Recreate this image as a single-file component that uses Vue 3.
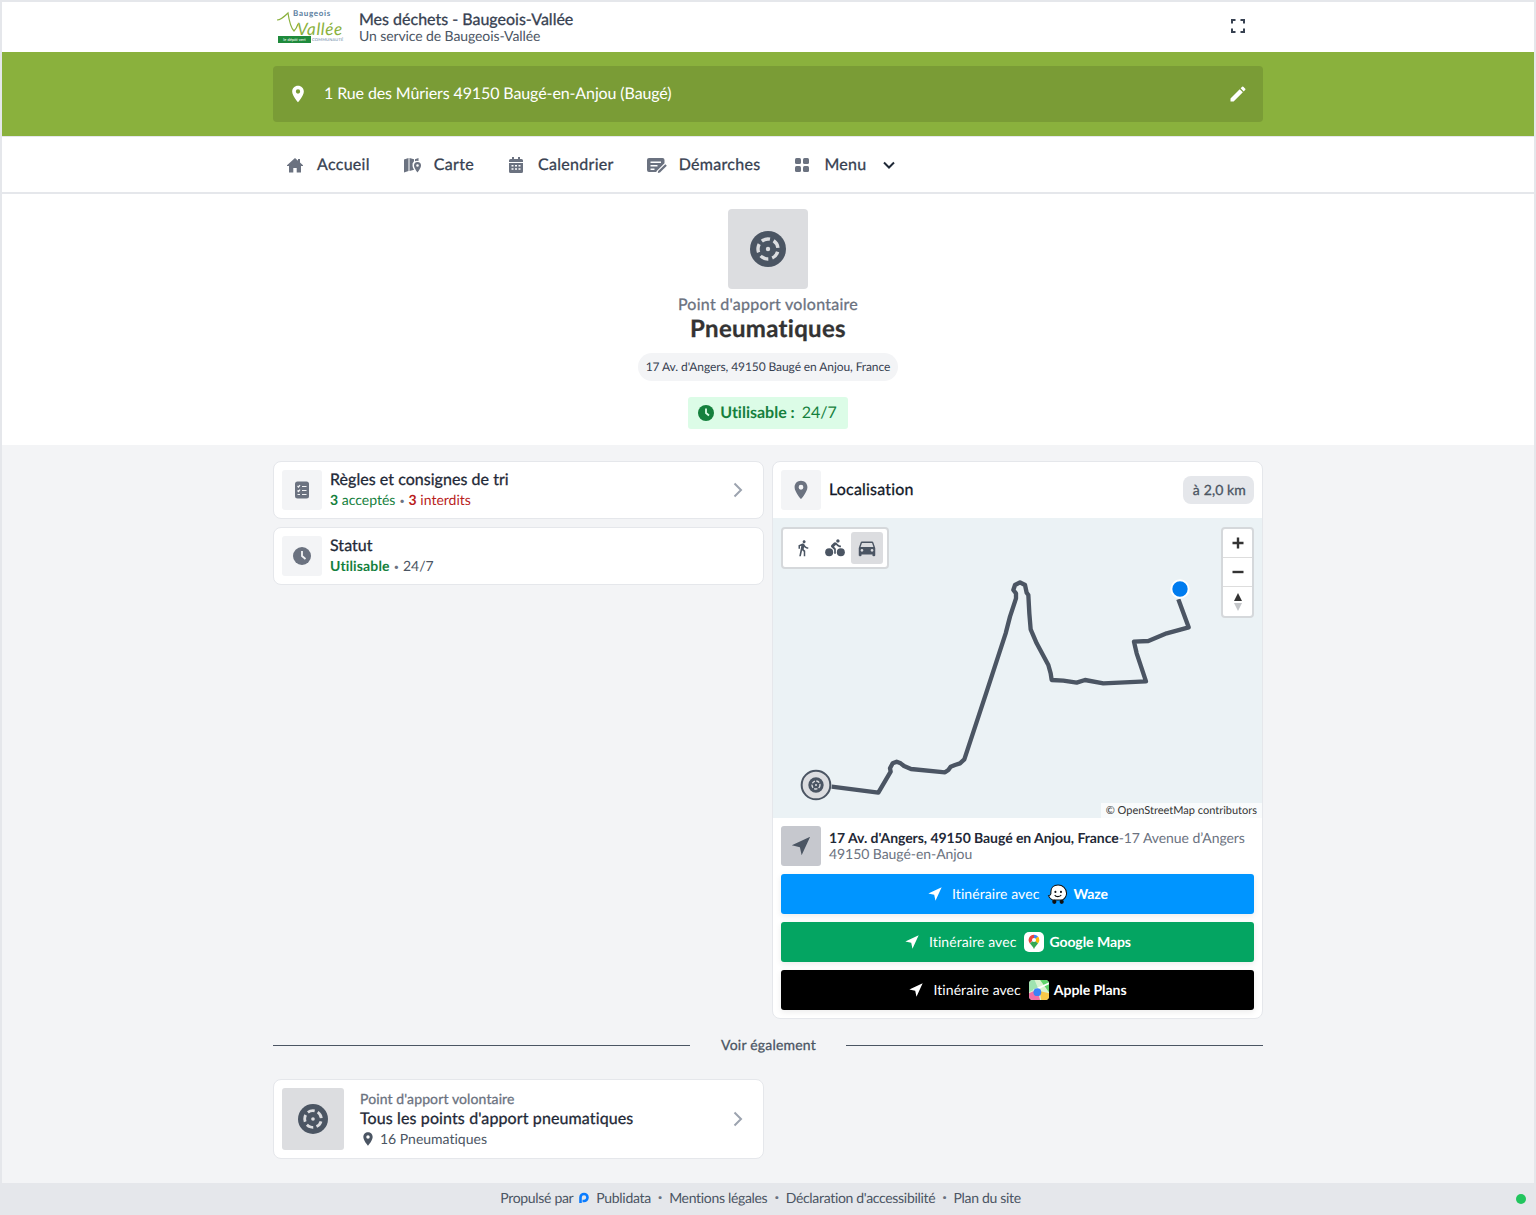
<script setup>
const pin = 'M12 2C8 2 5 5.100 5 9c0 5.200 7 13 7 13s7-7.800 7-13c0-3.900-3-7-7-7zm0 9.600A2.600 2.600 0 1 1 12 6.400a2.600 2.600 0 0 1 0 5.200z'
const arrow = 'M22 2 2 11.300l8.800 2 1.900 8.700z'

const navItems = [
  { label: 'Accueil', icon: 'home' },
  { label: 'Carte', icon: 'map' },
  { label: 'Calendrier', icon: 'calendar' },
  { label: 'Démarches', icon: 'form' },
  { label: 'Menu', icon: 'grid' }
]

const routePoints = [
  [155, 650], [295, 668], [332, 605], [330, 595], [338, 580], [350, 575], [362, 580], [372, 588],
  [393, 597], [495, 607], [505, 600], [512, 590], [525, 585], [540, 580], [553, 568], [620, 365],
  [677, 190], [690, 140], [708, 85], [708, 70], [700, 60], [705, 45], [720, 37], [735, 45],
  [740, 68], [745, 75], [748, 130], [752, 178], [770, 220], [805, 285], [812, 310], [815, 330],
  [850, 332], [890, 338], [915, 330], [970, 340], [1098, 334], [1070, 250], [1062, 215], [1105, 213],
  [1160, 190], [1226, 172], [1195, 88]
].map(p => p.join(',')).join(' ')
</script>

<template>
  <div class="page">
    <header class="top">
      <div class="wrap top-inner">
        <div class="logo">
          <svg class="logo-swoosh" viewBox="0 0 26 24" width="26" height="24">
            <path d="M0 10c4 0 7-3 11-7 1 7 2 14 6 18 2-2 3-4 4-7" fill="none" stroke="#8ab13d" stroke-width="1.200" />
          </svg>
          <span class="logo-top">Baugeois</span>
          <span class="logo-name">Vallée</span>
          <span class="logo-bar"><i>le dépôt vert</i><b>COMMUNAUTÉ</b></span>
        </div>
        <div class="brand">
          <div class="brand-title">Mes déchets - Baugeois-Vallée</div>
          <div class="brand-sub">Un service de Baugeois-Vallée</div>
        </div>
        <svg class="expand" viewBox="0 0 14 14" width="14" height="14">
          <path d="M1 4.500V1h3.500M9.500 1H13v3.500M13 9.500V13H9.500M4.500 13H1V9.500" fill="none" stroke="#374151" stroke-width="2" />
        </svg>
      </div>
    </header>

    <section class="band">
      <div class="wrap">
        <div class="address-bar">
          <svg viewBox="0 0 24 24" width="20" height="20"><path :d="pin" fill="#fff" fill-rule="evenodd" /></svg>
          <span class="address-text">1 Rue des Mûriers 49150 Baugé-en-Anjou (Baugé)</span>
          <svg class="pencil" viewBox="0 0 24 24" width="20" height="20">
            <path fill="#fff" d="M3 17.250V21h3.750L17.810 9.940l-3.750-3.750L3 17.250zM20.710 7.040a1 1 0 0 0 0-1.410l-2.340-2.340a1 1 0 0 0-1.410 0l-1.830 1.830 3.750 3.750 1.830-1.830z" />
          </svg>
        </div>
      </div>
    </section>

    <nav class="nav">
      <div class="wrap nav-inner">
        <a v-for="item in navItems" :key="item.label" class="nav-item">
          <svg v-if="item.icon === 'home'" class="nav-icon" viewBox="0 0 16 16" width="16" height="16">
            <path fill="#6b7280" d="M8 1 0 8.300V9h2v6.500h4.300V11h3.400v4.500H14V9h2v-.7L13 5.600V2h-2v1.800z" />
          </svg>
          <svg v-else-if="item.icon === 'map'" class="nav-icon map-icon" viewBox="0 0 18 18" width="18" height="18">
            <path fill="#6b7280" d="M0 3.500 4.500 2v13L0 16.500zM5.500 2 10 3.200v2A4.500 4.500 0 0 0 8.500 9.500c0 1.500.8 3 1.600 4.200L5.500 15z" />
            <path fill="#6b7280" d="M11 3.200 14.500 2v3.100a4.600 4.600 0 0 0-3.500.1z" />
            <path fill="#6b7280" fill-rule="evenodd" d="M13.500 6A3.500 3.500 0 0 0 10 9.500c0 2.500 3.500 7 3.500 7s3.500-4.500 3.500-7A3.500 3.500 0 0 0 13.500 6zm0 4.800a1.300 1.300 0 1 1 0-2.600 1.300 1.300 0 0 1 0 2.600z" />
          </svg>
          <svg v-else-if="item.icon === 'calendar'" class="nav-icon" viewBox="0 0 16 16" width="16" height="16">
            <path fill="#6b7280" fill-rule="evenodd" d="M4 0h2v2h4V0h2v2h1.500A1.500 1.500 0 0 1 15 3.500V5H1V3.500A1.500 1.500 0 0 1 2.500 2H4zM1 6h14v8.500a1.500 1.500 0 0 1-1.500 1.500h-11A1.500 1.500 0 0 1 1 14.500zm2.500 2v1.600h2V8zm3.500 0v1.600h2V8zm3.500 0v1.600h2V8zm-7 3.200v1.600h2v-1.600zm3.500 0v1.600h2v-1.600zm3.500 0v1.600h2v-1.600z" />
          </svg>
          <svg v-else-if="item.icon === 'form'" class="nav-icon wide" viewBox="0 0 20 16" width="20" height="16">
            <path fill="#6b7280" fill-rule="evenodd" d="M2 1h13.500a2 2 0 0 1 2 2v3.200l-7.800 7.800-.4 1H2a2 2 0 0 1-2-2V3a2 2 0 0 1 2-2zm1.500 3.500V6h10.500V4.500zm0 3.500v1.500h7V8zm0 3.500V13h4v-1.500z" />
            <path fill="#6b7280" d="M18.300 7.300 19.800 8.800 13 15.600l-2.200.4.400-2z" />
          </svg>
          <svg v-else class="nav-icon" viewBox="0 0 16 16" width="16" height="16">
            <rect fill="#6b7280" x="1" y="1" width="6" height="6" rx="1.500" />
            <rect fill="#6b7280" x="9" y="1" width="6" height="6" rx="1.500" />
            <rect fill="#6b7280" x="1" y="9" width="6" height="6" rx="1.500" />
            <rect fill="#6b7280" x="9" y="9" width="6" height="6" rx="1.500" />
          </svg>
          <span class="medium">{{ item.label }}</span>
          <svg v-if="item.icon === 'grid'" class="chevron-down" viewBox="0 0 12 8" width="12" height="8">
            <path d="M1 1.500 6 6.500 11 1.500" fill="none" stroke="#1f2937" stroke-width="2" />
          </svg>
        </a>
      </div>
    </nav>

    <section class="hero">
      <div class="hero-icon">
        <svg viewBox="0 0 36 36" width="36" height="36">
          <circle cx="18" cy="18" r="18" fill="#4b5563" />
          <circle cx="18" cy="18" r="10" fill="none" stroke="#dcdde0" stroke-width="3.400" stroke-dasharray="8.500 4" transform="rotate(16 18 18)" />
          <circle cx="18" cy="18" r="2.200" fill="#dcdde0" />
        </svg>
      </div>
      <div class="hero-kicker medium">Point d'apport volontaire</div>
      <h1 class="hero-title">Pneumatiques</h1>
      <div class="hero-address">17 Av. d'Angers, 49150 Baugé en Anjou, France</div>
      <div class="hero-status">
        <svg viewBox="0 0 16 16" width="16" height="16">
          <circle cx="8" cy="8" r="8" fill="#15803d" />
          <path d="M8 3.500V8l3 2.500" fill="none" stroke="#dcfce7" stroke-width="1.800" />
        </svg>
        <b>Utilisable :</b>
        <span>24/7</span>
      </div>
    </section>

    <main class="main">
      <div class="wrap columns">
        <div class="col">
          <a class="card row">
            <span class="icon-box">
              <svg viewBox="0 0 16 18" width="16" height="18">
                <rect width="14" height="17" x="1" y=".5" rx="2.500" fill="#6b7280" />
                <path d="M3.500 5l1 1 1.500-1.800M3.500 9.500l1 1 1.500-1.800M3.500 13.500H6M8 5.500h4.500M8 9.500h4.500M8 13.500h4.500" fill="none" stroke="#f3f4f6" stroke-width="1.200" />
              </svg>
            </span>
            <span class="row-text">
              <span class="row-title medium">Règles et consignes de tri</span>
              <span class="row-sub">
                <span class="green"><b>3</b> acceptés</span>
                <i class="dot">•</i>
                <span class="red"><b>3</b> interdits</span>
              </span>
            </span>
            <svg class="chevron" viewBox="0 0 10 16" width="10" height="16">
              <path d="M1.500 1.500 8 8l-6.500 6.500" fill="none" stroke="#9ca3af" stroke-width="2" />
            </svg>
          </a>
          <a class="card row">
            <span class="icon-box">
              <svg viewBox="0 0 18 18" width="18" height="18">
                <circle cx="9" cy="9" r="9" fill="#6b7280" />
                <path d="M9 4v5l3.500 3" fill="none" stroke="#f3f4f6" stroke-width="1.800" />
              </svg>
            </span>
            <span class="row-text">
              <span class="row-title medium">Statut</span>
              <span class="row-sub">
                <b class="green">Utilisable</b>
                <i class="dot">•</i>
                <span class="muted">24/7</span>
              </span>
            </span>
          </a>
        </div>

        <div class="card location">
          <div class="location-head">
            <span class="icon-box">
              <svg viewBox="0 0 24 24" width="22" height="22"><path :d="pin" fill="#6b7280" fill-rule="evenodd" /></svg>
            </span>
            <span class="location-title medium">Localisation</span>
            <span class="distance medium">à 2,0 km</span>
          </div>

          <div class="map">
            <div class="modes">
              <span class="mode">
                <svg viewBox="0 0 24 24" width="18" height="18"><path fill="#4b5563" d="M13.500 5.500c1.100 0 2-.9 2-2s-.9-2-2-2-2 .9-2 2 .9 2 2 2zM9.800 8.900 7 23h2.100l1.800-8 2.100 2v6h2v-7.500l-2.100-2 .6-3C14.800 12 16.800 13 19 13v-2c-1.900 0-3.500-1-4.300-2.400l-1-1.600c-.4-.6-1-1-1.700-1-.3 0-.5.1-.8.1L6 8.300V13h2V9.600l1.800-.7" /></svg>
              </span>
              <span class="mode">
                <svg viewBox="0 0 24 24" width="20" height="20">
                  <path fill="#4b5563" d="M15.500 5.500c1.100 0 2-.9 2-2s-.9-2-2-2-2 .9-2 2 .9 2 2 2zM10.800 10.500l2.400-2.400.8.800c1.300 1.300 3 2.100 5.100 2.100V9c-1.500 0-2.700-.6-3.600-1.500l-1.900-1.900c-.5-.4-1-.6-1.600-.6s-1.100.2-1.400.6L7.800 8.400c-.4.400-.6.900-.6 1.400 0 .6.200 1.100.6 1.400L11 14v5h2v-6.200z" />
                  <circle cx="5" cy="17" r="4.800" fill="#4b5563" />
                  <circle cx="19" cy="17" r="4.800" fill="#4b5563" />
                </svg>
              </span>
              <span class="mode active">
                <svg viewBox="0 0 24 24" width="22" height="22"><path fill="#4b5563" d="M18.920 6.010C18.720 5.420 18.160 5 17.500 5h-11c-.66 0-1.210.42-1.420 1.010L3 12v8c0 .55.450 1 1 1h1c.55 0 1-.45 1-1v-1h12v1c0 .55.450 1 1 1h1c.55 0 1-.45 1-1v-8l-2.080-5.990zM6.500 16c-.83 0-1.500-.67-1.500-1.500S5.670 13 6.500 13s1.500.67 1.500 1.500S7.330 16 6.500 16zm11 0c-.83 0-1.500-.67-1.500-1.500s.67-1.500 1.500-1.500 1.500.67 1.500 1.500-.67 1.500-1.500 1.500zM5 11l1.500-4.500h11L19 11H5z" /></svg>
              </span>
            </div>

            <div class="zoom-ctrl">
              <span class="zoom-btn">
                <svg viewBox="0 0 12 12" width="12" height="12"><path d="M6 .5v11M.5 6h11" stroke="#333" stroke-width="2.400" /></svg>
              </span>
              <span class="zoom-btn">
                <svg viewBox="0 0 12 12" width="12" height="12"><path d="M.5 6h11" stroke="#333" stroke-width="2.400" /></svg>
              </span>
              <span class="zoom-btn">
                <svg viewBox="0 0 8 18" width="8" height="18">
                  <path d="M4 0 8 8H0z" fill="#333" />
                  <path d="M4 18 8 10H0z" fill="#c4c6c9" />
                </svg>
              </span>
            </div>

            <svg class="route" viewBox="0 0 1290 720" width="430" height="240">
              <polyline :points="routePoints" fill="none" stroke="#4b5563" stroke-width="13" stroke-linejoin="round" />
              <circle cx="108" cy="645" r="43" fill="#dcdde0" stroke="#4b5563" stroke-width="6" />
              <circle cx="108" cy="645" r="23" fill="#4b5563" />
              <circle cx="108" cy="645" r="12" fill="none" stroke="#dcdde0" stroke-width="4" stroke-dasharray="10 4" />
              <circle cx="108" cy="645" r="3" fill="#dcdde0" />
              <circle cx="1200" cy="57" r="26" fill="#007cef" stroke="#fff" stroke-width="6" />
            </svg>

            <div class="attribution">© OpenStreetMap contributors</div>
          </div>

          <div class="place">
            <span class="icon-box dark">
              <svg viewBox="0 0 24 24" width="22" height="22"><path :d="arrow" fill="#4b5563" /></svg>
            </span>
            <p class="place-text"><b>17 Av. d'Angers, 49150 Baugé en Anjou, France</b>-17 Avenue d’Angers<br>49150 Baugé-en-Anjou</p>
          </div>

          <div class="routes">
            <a class="route-btn waze">
              <svg viewBox="0 0 24 24" width="16" height="16"><path :d="arrow" fill="#fff" /></svg>
              <span class="with">Itinéraire avec</span>
              <svg class="app" viewBox="0 0 20 20" width="21" height="21">
                <path d="M10.500 1C6 1 3.700 4 3.700 7.500v1.800c0 1.200-1 1.600-2.300 1.800.6 2 2.100 3.300 3.800 4.100h9.500c2.200-1.200 3.900-3.500 3.900-6.300C18.600 4.300 15 1 10.500 1z" fill="#fff" stroke="#111" stroke-width="1" />
                <circle cx="8" cy="7.500" r="1" fill="#111" />
                <circle cx="13.300" cy="7.500" r="1" fill="#111" />
                <path d="M7.300 10.500c1 2 5 2 6.300 0" fill="none" stroke="#111" stroke-width="1" />
                <circle cx="7" cy="17" r="2" fill="#111" />
                <circle cx="14" cy="17" r="2" fill="#111" />
              </svg>
              <b>Waze</b>
            </a>
            <a class="route-btn gmaps">
              <svg viewBox="0 0 24 24" width="16" height="16"><path :d="arrow" fill="#fff" /></svg>
              <span class="with">Itinéraire avec</span>
              <span class="app-tile">
                <svg viewBox="0 0 24 24" width="16" height="16">
                  <path d="M12 1a8 8 0 0 0-6.100 13.200L12 7z" fill="#e8453c" />
                  <path d="M12 1a8 8 0 0 1 6.100 2.900L12 10z" fill="#4285f4" />
                  <path d="M18.100 3.900A8 8 0 0 1 20 9c0 2-1 3.600-2 5.200L12 9z" fill="#fbbc04" />
                  <path d="M5.900 14.200C8 17 11 19 12 23c1-4 4-6 6-8.800L12 9z" fill="#34a853" />
                  <circle cx="12" cy="9" r="3" fill="#fff" />
                </svg>
              </span>
              <b>Google Maps</b>
            </a>
            <a class="route-btn apple">
              <svg viewBox="0 0 24 24" width="16" height="16"><path :d="arrow" fill="#fff" /></svg>
              <span class="with">Itinéraire avec</span>
              <svg class="app" viewBox="0 0 18 18" width="20" height="20">
                <rect width="18" height="18" rx="3.500" fill="#d9f3d0" />
                <path d="M10 0h4.500A3.500 3.500 0 0 1 18 3.500V11z" fill="#5fd36b" />
                <path d="M0 11 8 7 5 0H3.500A3.500 3.500 0 0 0 0 3.500z" fill="#9fe3b0" />
                <path d="M0 12 7.500 8.500 10 18H3.500A3.500 3.500 0 0 1 0 14.500z" fill="#f26fa6" />
                <path d="M11 18 9.500 10 18 12v2.500a3.500 3.500 0 0 1-3.500 3.500z" fill="#f7c948" />
                <path d="M4 9.500 18 3" stroke="#fff" stroke-width="1.500" />
                <circle cx="7.500" cy="11" r="3.500" fill="#3b82f6" />
              </svg>
              <b>Apple Plans</b>
            </a>
          </div>
        </div>
      </div>

      <div class="wrap see-also">
        <span class="line"></span>
        <span class="see-label medium">Voir également</span>
        <span class="line"></span>
      </div>

      <div class="wrap">
        <a class="card row related">
          <span class="icon-box big">
            <svg viewBox="0 0 36 36" width="30" height="30">
              <circle cx="18" cy="18" r="18" fill="#4b5563" />
              <circle cx="18" cy="18" r="10" fill="none" stroke="#dcdde0" stroke-width="3.400" stroke-dasharray="8.500 4" transform="rotate(16 18 18)" />
              <circle cx="18" cy="18" r="2.200" fill="#dcdde0" />
            </svg>
          </span>
          <span class="row-text">
            <span class="related-kicker medium">Point d'apport volontaire</span>
            <span class="row-title medium">Tous les points d'apport pneumatiques</span>
            <span class="related-count">
              <svg viewBox="0 0 24 24" width="16" height="16"><path :d="pin" fill="#4b5563" fill-rule="evenodd" /></svg>
              <span>16 Pneumatiques</span>
            </span>
          </span>
          <svg class="chevron" viewBox="0 0 10 16" width="10" height="16">
            <path d="M1.500 1.500 8 8l-6.500 6.500" fill="none" stroke="#9ca3af" stroke-width="2" />
          </svg>
        </a>
      </div>
    </main>

    <footer class="footer">
      <span>Propulsé par</span>
      <svg class="pub-logo" viewBox="0 0 12 12" width="12" height="12">
        <path d="M2.500 11V5.500a3.500 3.500 0 1 1 3.500 3.500H4.500" fill="none" stroke="#0a7cff" stroke-width="2.600" />
      </svg>
      <span>Publidata</span>
      <i class="foot-dot">•</i>
      <span>Mentions légales</span>
      <i class="foot-dot">•</i>
      <span>Déclaration d'accessibilité</span>
      <i class="foot-dot">•</i>
      <span>Plan du site</span>
      <span class="online"></span>
    </footer>
  </div>
</template>

<style>
body {
  font-family: Lato, "Liberation Sans", sans-serif;
  font-variant-ligatures: none;
  text-rendering: geometricPrecision;
}
</style>

<style scoped>
* {
  box-sizing: border-box;
}

.page {
  position: relative;
  display: flex;
  flex-direction: column;
  min-height: 1215px;
  border: 2px solid #e5e7eb;
  border-bottom: 0;
  background: #f3f4f6;
  color: #1f2937;
  font-family: Lato, "Liberation Sans", sans-serif;
}

.wrap {
  width: 990px;
  margin: 0 auto;
}

/* Lato has no medium weight installed */
.medium {
  -webkit-text-stroke: 0.3px currentColor;
  letter-spacing: 0.12px;
}

.top {
  height: 50px;
  background: #fff;
}

.top-inner {
  display: flex;
  align-items: center;
  height: 100%;
}

.logo {
  position: relative;
  width: 86px;
  height: 50px;
  flex: none;
}

.logo-swoosh {
  position: absolute;
  left: 4px;
  top: 8px;
}

.logo-top {
  position: absolute;
  left: 20px;
  top: 7px;
  font-size: 8px;
  font-weight: 700;
  line-height: 9px;
  letter-spacing: 0.7px;
  color: #5b7ea0;
}

.logo-name {
  position: absolute;
  left: 24px;
  top: 19px;
  font-size: 17px;
  font-style: italic;
  line-height: 15px;
  letter-spacing: 0.6px;
  color: #8ab13d;
}

.logo-bar {
  position: absolute;
  left: 5px;
  top: 34px;
  display: flex;
  align-items: center;
  height: 7px;
  font-size: 4px;
  line-height: 7px;
}

.logo-bar i {
  width: 33px;
  background: #1f8a3c;
  color: #fff;
  font-style: normal;
  text-align: center;
  white-space: nowrap;
  overflow: hidden;
}

.logo-bar b {
  margin-left: 1px;
  font-weight: 400;
  color: #5b7ea0;
  letter-spacing: 0.2px;
}

.brand {
  padding-top: 2px;
  line-height: 16px;
}

.brand-title {
  font-size: 16px;
  -webkit-text-stroke: 0.3px currentColor;
  color: #374151;
}

.brand-sub {
  font-size: 14px;
  letter-spacing: -0.1px;
  color: #4b5563;
}

.expand {
  margin-left: auto;
  margin-right: 18px;
  margin-bottom: 2px;
}

.band {
  height: 84px;
  padding-top: 14px;
  background: #8ab13d;
}

.address-bar {
  display: flex;
  align-items: center;
  height: 56px;
  padding: 0 15px;
  border-radius: 4px;
  background: #7a9c36;
  color: #fff;
}

.address-text {
  margin-left: 16px;
  padding-bottom: 2px;
  font-size: 16px;
  letter-spacing: -0.11px;
}

.pencil {
  margin-left: auto;
}

.nav {
  height: 58px;
  background: #fff;
  border-top: 1px solid #e5e7eb;
  border-bottom: 2px solid #e5e7eb;
}

.nav-inner {
  display: flex;
  align-items: center;
  gap: 6px;
  height: 100%;
}

.nav-item {
  display: flex;
  align-items: center;
  gap: 14px;
  padding: 0 14px;
  font-size: 16px;
  color: #374151;
}

.nav-item .medium {
  letter-spacing: 0.3px;
}

.nav-icon.map-icon {
  margin-right: -2px;
}

.nav-icon.wide {
  margin-left: -1px;
  margin-right: -2px;
}

.chevron-down {
  margin-left: 2px;
}

.hero {
  display: flex;
  flex-direction: column;
  align-items: center;
  padding: 15px 0 16px;
  background: #fff;
}

.hero-icon {
  display: flex;
  align-items: center;
  justify-content: center;
  width: 80px;
  height: 80px;
  border-radius: 4px;
  background: #dcdde0;
}

.hero-kicker {
  margin-top: 6px;
  font-size: 16px;
  line-height: 20px;
  color: #6b7280;
}

.hero-kicker.medium {
  letter-spacing: 0.28px;
}

.hero-title {
  margin: 0;
  font-size: 24px;
  font-weight: 700;
  line-height: 28px;
  letter-spacing: 0.3px;
  -webkit-text-stroke: 0.3px currentColor;
  color: #333;
}

.hero-address {
  margin-top: 10px;
  padding: 0 8px;
  border-radius: 14px;
  background: #f3f4f6;
  font-size: 12px;
  line-height: 28px;
  letter-spacing: -0.09px;
  color: #374151;
}

.hero-status {
  display: flex;
  align-items: center;
  gap: 6px;
  height: 32px;
  margin-top: 16px;
  padding: 0 11px 0 10px;
  border-radius: 3px;
  background: #dcfce7;
  font-size: 16px;
  color: #15803d;
}

.hero-status b {
  padding-bottom: 2px;
  font-weight: 700;
}

.hero-status span {
  margin-left: 1px;
  padding-bottom: 2px;
}

.main {
  flex: 1;
  padding-top: 16px;
}

.columns {
  display: grid;
  grid-template-columns: 491px 491px;
  gap: 8px;
  align-items: start;
}

.col {
  display: flex;
  flex-direction: column;
  gap: 8px;
}

.card {
  display: block;
  border: 1px solid #e5e7eb;
  border-radius: 8px;
  background: #fff;
}

.row {
  display: flex;
  align-items: center;
  gap: 8px;
  padding: 8px;
}

.icon-box {
  display: flex;
  align-items: center;
  justify-content: center;
  width: 40px;
  height: 40px;
  flex: none;
  border-radius: 3px;
  background: #f3f4f6;
}

.icon-box.dark {
  background: #c6c8ce;
}

.icon-box.big {
  width: 62px;
  height: 62px;
  background: #dcdde0;
}

.row-text {
  display: flex;
  flex-direction: column;
  flex: 1;
}

.row-title {
  font-size: 16px;
  line-height: 20px;
  color: #1f2937;
}

.col .row-title.medium {
  letter-spacing: 0.04px;
}

.row-sub {
  height: 20px;
  font-size: 14px;
  line-height: 20px;
  color: #4b5563;
}

.row-sub b {
  font-weight: 700;
}

.row-sub b.green {
  letter-spacing: 0.15px;
}

.green {
  color: #15803d;
}

.red {
  color: #b91c1c;
}

.muted {
  color: #4b5563;
}

.dot {
  margin: 0 4px;
  font-size: 9px;
  font-style: normal;
  line-height: 0;
  color: #6b7280;
  vertical-align: 1px;
}

.chevron {
  margin-right: 12px;
}

.location {
  overflow: hidden;
}

.location-head {
  display: flex;
  align-items: center;
  gap: 8px;
  height: 56px;
  padding: 0 8px;
}

.location-title {
  padding-bottom: 2px;
  font-size: 16px;
  letter-spacing: 0.2px;
  color: #111827;
}

.distance {
  margin-left: auto;
  padding: 0 8px 0 10px;
  border-radius: 8px;
  background: #e5e7eb;
  font-size: 14px;
  line-height: 28px;
  color: #4b5563;
}

.map {
  position: relative;
  height: 300px;
  background: #ebf2f5;
}

.modes {
  position: absolute;
  left: 8px;
  top: 9px;
  display: flex;
  padding: 3px 4px;
  border: 2px solid #d5d8db;
  border-radius: 4px;
  background: #fff;
}

.mode {
  display: flex;
  align-items: center;
  justify-content: center;
  width: 32px;
  height: 32px;
  border-radius: 3px;
}

.mode.active {
  background: #dcdde0;
}

.zoom-ctrl {
  position: absolute;
  right: 8px;
  top: 9px;
  display: flex;
  flex-direction: column;
  border: 2px solid #d5d8db;
  border-radius: 4px;
  background: #fff;
}

.zoom-btn {
  display: flex;
  align-items: center;
  justify-content: center;
  width: 29px;
  height: 29px;
  border-bottom: 1px solid #ddd;
}

.zoom-btn:last-child {
  border-bottom: 0;
}

.route {
  position: absolute;
  left: 7px;
  top: 52px;
}

.attribution {
  position: absolute;
  right: 0;
  bottom: 0;
  padding: 0 5px;
  background: rgba(255, 255, 255, 0.7);
  font-size: 11px;
  line-height: 15px;
  color: #333;
}

.place {
  display: flex;
  gap: 8px;
  padding: 8px 8px 0;
}

.place-text {
  margin: 4px 0 0;
  font-size: 14px;
  line-height: 16px;
  letter-spacing: -0.06px;
  color: #6b7280;
}

.place-text b {
  font-weight: 700;
  color: #1f2937;
}

.routes {
  display: flex;
  flex-direction: column;
  gap: 8px;
  padding: 8px;
}

.route-btn {
  display: flex;
  align-items: center;
  justify-content: center;
  height: 40px;
  padding-bottom: 2px;
  border-radius: 3px;
  box-shadow: 0 2px 6px rgba(0, 0, 0, 0.08);
  font-size: 14px;
  color: #fff;
}

.route-btn svg,
.route-btn .app-tile {
  margin-top: 2px;
}

.route-btn b {
  font-weight: 700;
  margin-left: 5px;
  letter-spacing: -0.05px;
}

.with {
  margin: 0 8px 0 9px;
  letter-spacing: 0.07px;
}

.waze {
  background: #0095ff;
}

.gmaps {
  background: #04a562;
}

.apple {
  background: #000;
}

.app-tile {
  display: flex;
  align-items: center;
  justify-content: center;
  width: 20px;
  height: 20px;
  border-radius: 5px;
  background: #fff;
}

.app-tile svg {
  margin-top: 0;
}

.see-also {
  display: flex;
  align-items: center;
  margin-top: 16px;
  height: 20px;
}

.line {
  flex: 1;
  height: 1px;
  background: #4b5563;
}

.see-label {
  margin: 0 30px 2px 31px;
  font-size: 14px;
  color: #4b5563;
}

.see-label.medium {
  letter-spacing: 0.2px;
}

.related {
  width: 491px;
  height: 80px;
  margin-top: 24px;
  gap: 16px;
}

.related-kicker {
  font-size: 14px;
  line-height: 20px;
  color: #6b7280;
}

.related-count {
  display: flex;
  align-items: center;
  gap: 4px;
  font-size: 14px;
  line-height: 20px;
  color: #4b5563;
}

.footer {
  display: flex;
  align-items: center;
  justify-content: center;
  height: 32px;
  margin: 0 -2px;
  padding-right: 15px;
  padding-bottom: 4px;
  background: #e5e7eb;
  font-size: 14px;
  letter-spacing: -0.32px;
  color: #4b5563;
}

.pub-logo {
  margin: 2px 6px 0 5px;
}

.foot-dot {
  margin: 0 7px;
  font-size: 8px;
  font-style: normal;
  color: #6b7280;
}

.online {
  position: absolute;
  right: 8px;
  bottom: 11px;
  width: 10px;
  height: 10px;
  border-radius: 50%;
  background: #22c55e;
}
</style>
